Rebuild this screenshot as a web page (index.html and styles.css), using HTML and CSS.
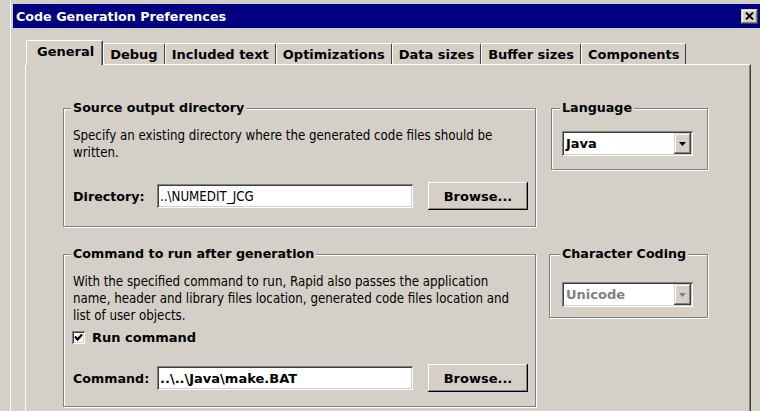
FILE: index.html
```html
<!DOCTYPE html>
<html>
<head>
<meta charset="utf-8">
<title>Code Generation Preferences</title>
<link rel="stylesheet" href="styles.css">
</head>
<body>
<div class="window">
  <div class="titlebar">
    <span class="title">Code Generation Preferences</span>
    <span class="close-btn">
      <svg width="9" height="8" viewBox="0 0 9 8"><path d="M1 0.5L8 7.5M8 0.5L1 7.5" stroke="#000" stroke-width="1.8" fill="none"/></svg>
    </span>
  </div>

  <div class="tabs">
    <div class="tab active">General</div>
    <div class="tab">Debug</div>
    <div class="tab">Included text</div>
    <div class="tab">Optimizations</div>
    <div class="tab">Data sizes</div>
    <div class="tab">Buffer sizes</div>
    <div class="tab">Components</div>
  </div>

  <div class="panel">
    <div class="grid">
      <fieldset class="group group-source">
        <legend>Source output directory</legend>
        <p class="desc">Specify an existing directory where the generated code files should be<br>written.</p>
        <div class="field-row row-dir">
          <span class="label">Directory:</span>
          <span class="textbox">..\NUMEDIT_JCG</span>
          <span class="button">Browse...</span>
        </div>
      </fieldset>

      <fieldset class="group group-lang">
        <legend>Language</legend>
        <div class="combo">
          <span class="combo-value">Java</span>
          <span class="combo-arrow"><svg width="7" height="4" viewBox="0 0 7 4"><path d="M0 0H7L3.5 4Z" fill="#000"/></svg></span>
        </div>
      </fieldset>

      <fieldset class="group group-cmd">
        <legend>Command to run after generation</legend>
        <p class="desc">With the specified command to run, Rapid also passes the application<br>name, header and library files location, generated code files location and<br>list of user objects.</p>
        <label class="check-row">
          <span class="checkbox"><svg width="9" height="9" viewBox="0 0 9 9"><path d="M1 3.5L3.5 6.5L8 1.5" stroke="#000" stroke-width="2.2" fill="none"/></svg></span>
          <span class="check-label">Run command</span>
        </label>
        <div class="field-row row-cmd">
          <span class="label">Command:</span>
          <span class="textbox bold">..\..\Java\make.BAT</span>
          <span class="button">Browse...</span>
        </div>
      </fieldset>

      <fieldset class="group group-coding">
        <legend>Character Coding</legend>
        <div class="combo disabled">
          <span class="combo-value">Unicode</span>
          <span class="combo-arrow"><svg width="7" height="4" viewBox="0 0 7 4"><path d="M0 0H7L3.5 4Z" fill="#808080"/></svg></span>
        </div>
      </fieldset>
    </div>
  </div>
</div>
</body>
</html>
```

FILE: styles.css
```css
* {
  box-sizing: border-box;
}

html, body {
  margin: 0;
  padding: 0;
}

body {
  width: 760px;
  height: 411px;
  overflow: hidden;
  background: #d4d0c8;
  color: #000;
  font-family: "DejaVu Sans Condensed", "DejaVu Sans", sans-serif;
  font-size: 13.2px;
}

/* bold captions use the wider face */
.title,
.tabs,
.group legend,
.label,
.textbox.bold,
.button,
.check-label,
.combo {
  font-family: "DejaVu Sans", sans-serif;
  font-weight: bold;
  font-size: 13px;
}

/* window frame */
.window {
  margin-left: 10px;
  height: 411px;
  border-left: 1px solid #fff;
  padding: 4px 0 0 2px;
}

.titlebar {
  height: 24px;
  background: #000080;
  display: flex;
  align-items: center;
  justify-content: space-between;
  padding: 0 2px 0 3px;
}

.title {
  color: #fff;
  font-size: 12.7px;
}

.close-btn {
  width: 17px;
  height: 15px;
  background: #d4d0c8;
  display: flex;
  align-items: center;
  justify-content: center;
  box-shadow: inset -1px -1px #404040, inset 1px 1px #d4d0c8, inset -2px -2px #808080, inset 2px 2px #fff;
}

/* tab strip */
.tabs {
  display: flex;
  align-items: flex-end;
  height: 24px;
  margin: 12px 0 0 13px;
}

.tab {
  height: 21px;
  padding: 0 6px;
  display: flex;
  align-items: center;
  border-top: 1px solid #fff;
  border-left: 1px solid #fff;
  border-right: 1px solid #404040;
  border-radius: 2px 2px 0 0;
  white-space: nowrap;
}

.tab.active {
  position: relative;
  z-index: 1;
  height: 25px;
  margin-bottom: -1px;
  padding: 0 8px 4px 10px;
  background: #d4d0c8;
  box-shadow: inset -1px 0 #808080;
}

/* tab page */
.panel {
  margin-left: 12px;
  width: 726px;
  height: 347px;
  border-top: 1px solid #fff;
  border-left: 1px solid #fff;
  border-right: 1px solid #404040;
  box-shadow: inset -1px 0 #808080;
  padding: 35px 0 0 37px;
}

.grid {
  display: grid;
  grid-template-columns: 473px 159px;
  column-gap: 13px;
  row-gap: 19px;
  align-items: start;
}

/* etched group boxes */
.group {
  margin: 0;
  min-width: 0;
  border: 1px solid #808080;
  box-shadow: 1px 1px 0 #fff, inset 1px 1px 0 #fff;
  padding: 0 7px 0 9px;
}

.group legend {
  font-size: 12.7px;
  line-height: 16px;
  padding: 0 2px;
  margin-left: -2px;
  background: #d4d0c8;
}

.desc {
  margin: 11px 0 0;
  line-height: 17px;
  white-space: nowrap;
}

.group-source {
  padding-bottom: 16px;
}

.group-cmd {
  padding-bottom: 14px;
}

.field-row {
  display: flex;
  align-items: center;
  height: 28px;
}

.row-dir {
  margin-top: 21px;
}

.row-cmd {
  margin-top: 18px;
}

.label {
  width: 84px;
  font-size: 12.7px;
}

.textbox {
  width: 256px;
  height: 24px;
  background: #fff;
  display: flex;
  align-items: center;
  padding: 0 3px;
  box-shadow: inset 1px 1px #808080, inset -1px -1px #fff, inset 2px 2px #404040, inset -2px -2px #d4d0c8;
  white-space: nowrap;
}

.button {
  margin-left: 15px;
  width: 100px;
  height: 28px;
  display: flex;
  align-items: center;
  justify-content: center;
  box-shadow: inset -1px -1px #000, inset 1px 1px #fff, inset -2px -2px #808080, inset 2px 2px #d4d0c8;
}

/* checkbox */
.check-row {
  display: flex;
  align-items: center;
  height: 17px;
  margin: 5px 0 0 -1px;
}

.checkbox {
  width: 13px;
  height: 13px;
  background: #fff;
  display: flex;
  align-items: center;
  justify-content: center;
  box-shadow: inset 1px 1px #808080, inset -1px -1px #fff, inset 2px 2px #404040, inset -2px -2px #d4d0c8;
}

.check-label {
  margin-left: 7px;
}

/* drop-down lists */
.group-lang {
  padding: 0 0 13px 10px;
  margin-left: 2px;
}

.group-coding {
  padding: 0 0 10px 12px;
}

.combo {
  margin-top: 15px;
  width: 131px;
  height: 25px;
  background: #fff;
  display: flex;
  align-items: center;
  justify-content: space-between;
  padding: 2px 2px 2px 4px;
  box-shadow: inset 1px 1px #808080, inset -1px -1px #fff, inset 2px 2px #404040, inset -2px -2px #d4d0c8;
}

.group-coding .combo {
  margin-top: 20px;
}

.combo.disabled {
  color: #808080;
}

.combo-arrow {
  width: 17px;
  height: 21px;
  background: #d4d0c8;
  display: flex;
  align-items: center;
  justify-content: center;
  box-shadow: inset -1px -1px #404040, inset 1px 1px #d4d0c8, inset -2px -2px #808080, inset 2px 2px #fff;
}
```
